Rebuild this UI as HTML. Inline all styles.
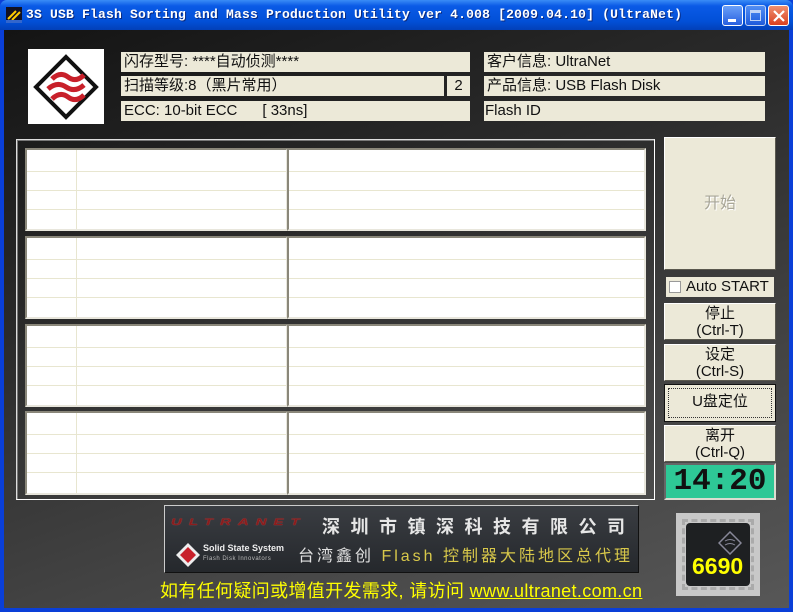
<!DOCTYPE html>
<html><head><meta charset="utf-8">
<style>
*{margin:0;padding:0;box-sizing:border-box}
body{width:793px;height:612px;overflow:hidden;font-family:"Liberation Sans","Noto Sans CJK SC",sans-serif;background:#0a3fd8;position:relative}
.a{position:absolute}
#title{left:0;top:0;width:793px;height:30px;background:linear-gradient(#3a8cf6,#0a5ae6 20%,#0250d8 70%,#0240b8);border-radius:7px 7px 0 0}
#title span{position:absolute;left:26px;top:7px;color:#fff;font:bold 13px "Liberation Mono","Noto Sans CJK SC",monospace;letter-spacing:0.2px;text-shadow:1px 1px #0a2a80}
#client{left:4px;top:30px;width:785px;height:578px;background:linear-gradient(160deg,#141414 0%,#2a2a2a 35%,#444 70%,#575757 100%)}
.f{position:absolute;background:#ece9d8;font-size:15px;color:#111;line-height:19px;padding-left:3px;height:20px;white-space:nowrap}
.wb{position:absolute;width:21px;height:21px;top:5px;border:1px solid #fff;border-radius:3px}
.pn{position:absolute;background:#fff;border-top:2px solid #8a877a;border-left:2px solid #8a877a;border-right:2px solid #e8e6dc;border-bottom:2px solid #e8e6dc}
.pn i{position:absolute;left:0;right:0;height:1px;background:#e8e6d0}
.btn{position:absolute;background:#ece9d8;border:1px solid #fff;border-right-color:#5a584e;border-bottom-color:#5a584e;text-align:center;font-size:15px;line-height:17px;color:#111}
</style></head><body>
<div id="title" class="a">
<svg class="a" style="left:6px;top:7px" width="16" height="16"><rect width="16" height="16" fill="#112"/><path d="M2 12 L10 4 M6 13 L14 5" stroke="#fc0" stroke-width="2"/><rect y="13" width="16" height="3" fill="#36c"/></svg>
<span>3S USB Flash Sorting and Mass Production Utility ver 4.008 [2009.04.10] (UltraNet)</span>
<div class="wb" style="left:722px;background:linear-gradient(#6aa0f8,#2860e0)"><div class="a" style="left:5px;top:13px;width:8px;height:3px;background:#fff"></div></div>
<div class="wb" style="left:745px;background:linear-gradient(#6aa0f8,#2860e0);opacity:.75"><div class="a" style="left:4px;top:4px;width:11px;height:11px;border:1px solid #fff;border-top-width:3px"></div></div>
<div class="wb" style="left:768px;background:linear-gradient(#f09070,#d84020)"><svg class="a" style="left:4px;top:4px" width="12" height="12"><path d="M1 1L11 11M11 1L1 11" stroke="#fff" stroke-width="2.2"/></svg></div>
</div>
<div id="client" class="a"></div>

<div class="a" style="left:28px;top:49px;width:76px;height:75px;background:#fff">
<svg width="76" height="75"><polygon points="38,8 68,38 38,68 8,38" fill="#fff" stroke="#111" stroke-width="4"/>
<path d="M24 30 q8 -8 16 -2 q8 6 16 -2 M20 40 q9 -8 18 -2 q9 6 18 -2 M24 50 q8 -8 16 -2 q8 6 16 -2" stroke="#c8202a" stroke-width="5" fill="none"/></svg></div>

<div class="f" style="left:121px;top:52px;width:349px">闪存型号: ****自动侦测****</div>
<div class="f" style="left:121px;top:76px;width:323px">扫描等级:8（黑片常用）</div>
<div class="f" style="left:447px;top:76px;width:23px;text-align:center;padding:0">2</div>
<div class="f" style="left:121px;top:101px;width:349px">ECC: 10-bit ECC&nbsp;&nbsp;&nbsp;&nbsp;&nbsp;&nbsp;[ 33ns]</div>
<div class="f" style="left:484px;top:52px;width:281px">客户信息: UltraNet</div>
<div class="f" style="left:484px;top:76px;width:281px">产品信息: USB Flash Disk</div>
<div class="f" style="left:484px;top:101px;width:281px;padding-left:1px">Flash ID</div>

<div class="a" style="left:16px;top:139px;width:639px;height:361px;border:1px solid #ddd;border-right-color:#fff;border-bottom-color:#fff;box-shadow:inset 1px 1px 0 #777"></div>

<div class="pn" style="left:25px;top:148px;width:263px;height:83px"><i style="top:21px"></i><i style="top:40px"></i><i style="top:59px"></i><b class="a" style="left:49px;top:0;bottom:0;width:1px;background:#e8e6d0"></b></div>
<div class="pn" style="left:287px;top:148px;width:359px;height:83px"><i style="top:21px"></i><i style="top:40px"></i><i style="top:59px"></i></div>
<div class="pn" style="left:25px;top:236px;width:263px;height:83px"><i style="top:21px"></i><i style="top:40px"></i><i style="top:59px"></i><b class="a" style="left:49px;top:0;bottom:0;width:1px;background:#e8e6d0"></b></div>
<div class="pn" style="left:287px;top:236px;width:359px;height:83px"><i style="top:21px"></i><i style="top:40px"></i><i style="top:59px"></i></div>
<div class="pn" style="left:25px;top:324px;width:263px;height:83px"><i style="top:21px"></i><i style="top:40px"></i><i style="top:59px"></i><b class="a" style="left:49px;top:0;bottom:0;width:1px;background:#e8e6d0"></b></div>
<div class="pn" style="left:287px;top:324px;width:359px;height:83px"><i style="top:21px"></i><i style="top:40px"></i><i style="top:59px"></i></div>
<div class="pn" style="left:25px;top:411px;width:263px;height:84px"><i style="top:21px"></i><i style="top:40px"></i><i style="top:59px"></i><b class="a" style="left:49px;top:0;bottom:0;width:1px;background:#e8e6d0"></b></div>
<div class="pn" style="left:287px;top:411px;width:359px;height:84px"><i style="top:21px"></i><i style="top:40px"></i><i style="top:59px"></i></div>

<div class="btn" style="left:664px;top:137px;width:112px;height:133px;line-height:131px;font-size:16px;color:#a8a698;text-shadow:1px 1px #fff">开始</div>
<div class="a" style="left:666px;top:277px;width:108px;height:20px;background:#ece9d8;font-size:15px;line-height:20px;color:#111"><span class="a" style="left:3px;top:4px;width:12px;height:12px;background:#fff;border:1px solid #999"></span><span class="a" style="left:20px;top:0">Auto START</span></div>
<div class="btn" style="left:664px;top:303px;width:112px;height:37px;padding-top:1px">停止<br>(Ctrl-T)</div>
<div class="btn" style="left:664px;top:344px;width:112px;height:37px;padding-top:1px">设定<br>(Ctrl-S)</div>
<div class="btn" style="left:664px;top:384px;width:112px;height:38px;border:1px solid #111;line-height:34px"><div class="a" style="left:3px;top:3px;right:3px;bottom:3px;border:1px dotted #333"></div>U盘定位</div>
<div class="btn" style="left:664px;top:425px;width:112px;height:37px;padding-top:1px">离开<br>(Ctrl-Q)</div>
<div class="a" style="left:664px;top:463px;width:112px;height:37px;background:#2ec896;border:2px solid #dcdcd0;border-top-color:#666;border-left-color:#666;font:bold 31px/33px 'Liberation Mono',monospace;color:#111;text-align:center;overflow:hidden">14:20</div>

<div class="a" style="left:164px;top:505px;width:475px;height:68px;background:linear-gradient(#3a3d42,#25282c);border:1px solid #ccc;border-right-color:#111;border-bottom-color:#111">
<div class="a" style="left:6px;top:8px;font:italic bold 15px 'Liberation Sans',sans-serif;color:#8a1d1d;letter-spacing:7px;transform:scaleY(.6);text-shadow:0 0 1px #f55">ULTRANET</div>
<div class="a" style="left:157px;top:7px;font-size:18px;font-weight:bold;color:#e6e6e6;letter-spacing:10.5px;white-space:nowrap">深圳市镇深科技有限公司</div>
<svg class="a" style="left:10px;top:36px" width="26" height="26"><polygon points="13,1 25,13 13,25 1,13" fill="#eee"/><polygon points="13,5 21,13 13,21 5,13" fill="#c8202a"/></svg>
<div class="a" style="left:38px;top:37px;font-size:9px;color:#eee;font-weight:bold">Solid State System</div>
<div class="a" style="left:38px;top:50px;font-size:6px;color:#bbb;letter-spacing:.5px">Flash Disk Innovators</div>
<div class="a" style="left:133px;top:36px;font-size:16px;color:#e0e0e0;letter-spacing:3px;white-space:nowrap">台湾鑫创 <span style="color:#d8c84a">Flash 控制器大陆地区总代理</span></div>
</div>
<div class="a" style="left:676px;top:513px;width:84px;height:83px;background:#c8c8c8">
<div class="a" style="left:6px;top:6px;width:72px;height:71px;border:3px dashed #aaa"></div>
<div class="a" style="left:10px;top:10px;width:64px;height:63px;background:#1e2022;border-radius:4px"></div>
<svg class="a" style="left:42px;top:18px" width="24" height="24"><polygon points="12,1 23,12 12,23 1,12" fill="none" stroke="#889" stroke-width="1.5"/><path d="M7 10q5-3 10 0M7 14q5-3 10 0" stroke="#889" fill="none"/></svg>
<div class="a" style="left:16px;top:40px;font:bold 23px 'Liberation Sans',sans-serif;color:#ff0">6690</div>
</div>
<div class="a" style="left:160px;top:580px;font-size:18px;color:#ff0;white-space:nowrap;line-height:22px;letter-spacing:0.35px">如有任何疑问或增值开发需求, 请访问 <span style="text-decoration:underline">www.ultranet.com.cn</span></div>
</body></html>
